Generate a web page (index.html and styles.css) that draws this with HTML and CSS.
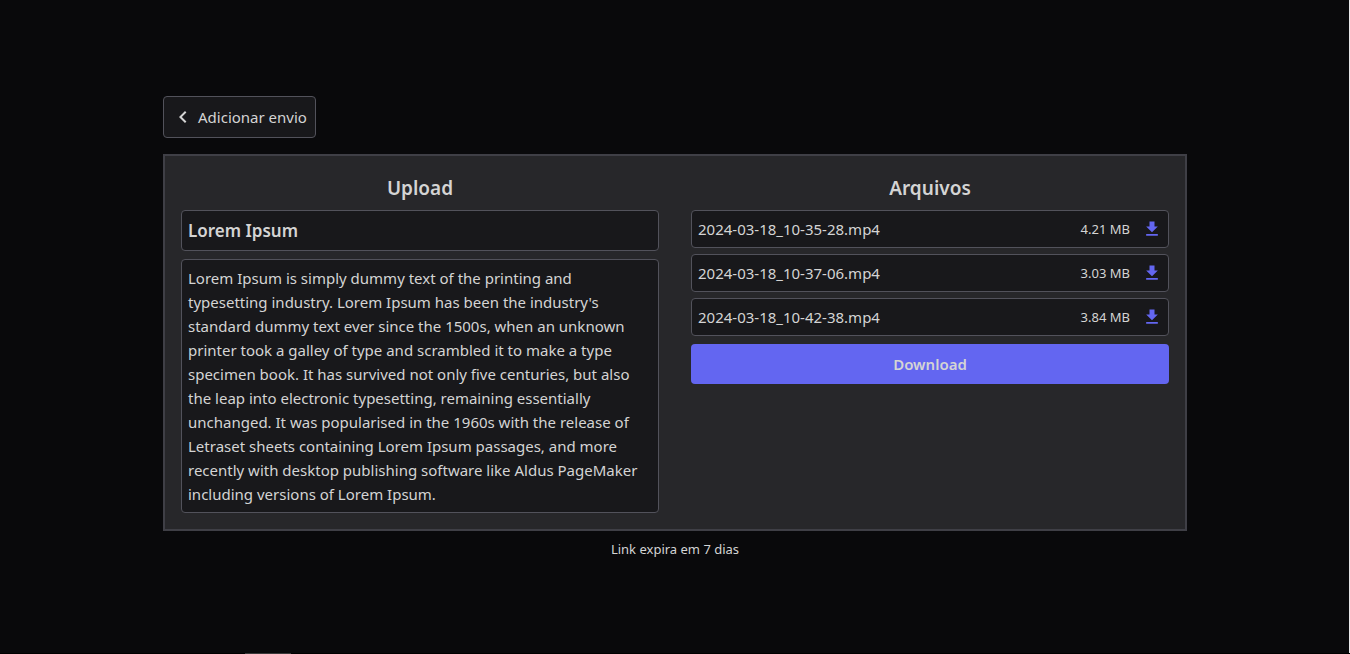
FILE: index.html
```html
<!DOCTYPE html>
<html lang="pt-BR">
<head>
<meta charset="utf-8">
<meta name="viewport" content="width=device-width, initial-scale=1">
<title>Download</title>
<link rel="stylesheet" href="styles.css">
</head>
<body>
<svg class="sprite" aria-hidden="true">
  <symbol id="download" viewBox="0 0 24 24"><path d="M5 20h14v-2H5zM19 9h-4V3H9v6H5l7 7z"/></symbol>
</svg>
<main class="page">
  <a class="back" href="#">
    <svg class="chevron" viewBox="0 0 24 24" aria-hidden="true"><path d="M14.41 16.59 9.83 12l4.58-4.59L13 6l-6 6 6 6z"/></svg>
    Adicionar envio
  </a>
  <div class="panel">
    <section class="column">
      <h2 class="heading">Upload</h2>
      <h3 class="box title">Lorem Ipsum</h3>
      <p class="box description">Lorem Ipsum is simply dummy text of the printing and typesetting industry. Lorem Ipsum has been the industry's standard dummy text ever since the 1500s, when an unknown printer took a galley of type and scrambled it to make a type specimen book. It has survived not only five centuries, but also the leap into electronic typesetting, remaining essentially unchanged. It was popularised in the 1960s with the release of Letraset sheets containing Lorem Ipsum passages, and more recently with desktop publishing software like Aldus PageMaker including versions of Lorem Ipsum.</p>
    </section>
    <section class="column">
      <h2 class="heading">Arquivos</h2>
      <ul class="files">
        <li class="box file"><span class="name">2024-03-18_10-35-28.mp4</span><span class="size">4.21 MB</span><button class="get" type="button" aria-label="Baixar 2024-03-18_10-35-28.mp4"><svg class="icon"><use href="#download"/></svg></button></li>
        <li class="box file"><span class="name">2024-03-18_10-37-06.mp4</span><span class="size">3.03 MB</span><button class="get" type="button" aria-label="Baixar 2024-03-18_10-37-06.mp4"><svg class="icon"><use href="#download"/></svg></button></li>
        <li class="box file"><span class="name">2024-03-18_10-42-38.mp4</span><span class="size">3.84 MB</span><button class="get" type="button" aria-label="Baixar 2024-03-18_10-42-38.mp4"><svg class="icon"><use href="#download"/></svg></button></li>
      </ul>
      <button class="download" type="button">Download</button>
    </section>
  </div>
  <p class="expiry">Link expira em 7 dias</p>
</main>
<div class="side-edge"></div>
<div class="edge"></div>
</body>
</html>
```
FILE: styles.css
```css
* { box-sizing: border-box; margin: 0; }
body {
  background: #09090b;
  color: #d4d4d4;
  font: 15px/24px "Segoe UI", "Noto Sans", sans-serif;
}
.sprite { position: absolute; width: 0; height: 0; }
.page {
  display: flex;
  flex-direction: column;
  justify-content: center;
  align-items: flex-start;
  max-width: 1024px;
  min-height: 100vh;
  margin: 0 auto;
}
.back {
  display: flex;
  align-items: center;
  gap: 2px;
  padding: 8px;
  margin-bottom: 16px;
  border: 1px solid #52525b;
  border-radius: 4px;
  background: #18181b;
  color: inherit;
  text-decoration: none;
}
.chevron { width: 24px; height: 24px; fill: currentColor; }
.panel {
  display: grid;
  grid-template-columns: repeat(auto-fit, minmax(320px, 1fr));
  gap: 32px;
  width: 100%;
  padding: 16px;
  border: 2px solid #3f3f46;
  background: #27272a;
}
.column { display: flex; flex-direction: column; gap: 8px; }
.heading { padding-top: 2px; font-size: 19px; font-weight: 600; line-height: 28px; text-align: center; }
.box {
  padding: 6px;
  border: 1px solid #52525b;
  border-radius: 4px;
  background: #18181b;
}
.title { font-size: 17px; font-weight: 600; line-height: 27px; }
.files { display: flex; flex-direction: column; gap: 6px; padding: 0; list-style: none; }
.file { display: flex; align-items: center; }
.name { flex: 1; }
.size { margin-right: 12px; font-size: 13px; }
.get { display: flex; padding: 0; border: 0; background: none; color: #6366f1; cursor: pointer; }
.icon { width: 20px; height: 20px; fill: currentColor; }
.download {
  padding: 8px;
  border: 0;
  border-radius: 4px;
  background: #6366f1;
  color: inherit;
  font: inherit;
  font-weight: 600;
  cursor: pointer;
}
.expiry { align-self: center; margin-top: 8px; font-size: 13px; line-height: 20px; }
.side-edge {
  position: fixed;
  top: 0;
  right: 0;
  bottom: 0;
  width: 1px;
  background: #e8e8ea;
}
.edge {
  position: fixed;
  left: 0;
  right: 0;
  bottom: 0;
  height: 1px;
  background: linear-gradient(90deg, #000 245px, #3a3a3a 245px, #3a3a3a 291px, #000 291px);
}
```
